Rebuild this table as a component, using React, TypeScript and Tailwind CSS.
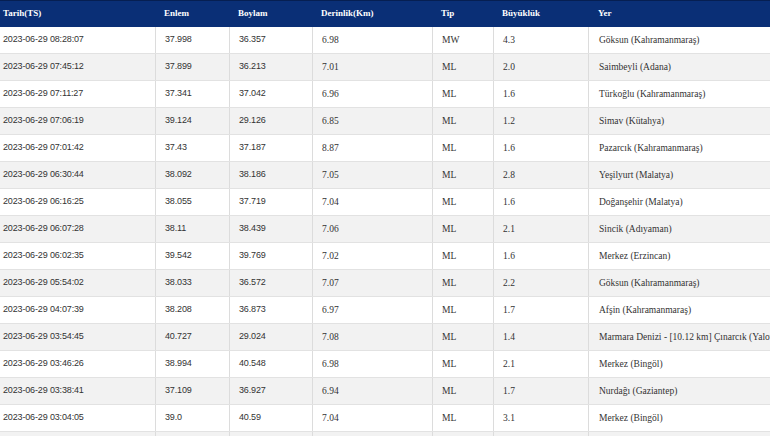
import React from "react";

const rows: string[][] = [
  ["2023-06-29 08:28:07", "37.998", "36.357", "6.98", "MW", "4.3", "Göksun (Kahramanmaraş)"],
  ["2023-06-29 07:45:12", "37.899", "36.213", "7.01", "ML", "2.0", "Saimbeyli (Adana)"],
  ["2023-06-29 07:11:27", "37.341", "37.042", "6.96", "ML", "1.6", "Türkoğlu (Kahramanmaraş)"],
  ["2023-06-29 07:06:19", "39.124", "29.126", "6.85", "ML", "1.2", "Simav (Kütahya)"],
  ["2023-06-29 07:01:42", "37.43", "37.187", "8.87", "ML", "1.6", "Pazarcık (Kahramanmaraş)"],
  ["2023-06-29 06:30:44", "38.092", "38.186", "7.05", "ML", "2.8", "Yeşilyurt (Malatya)"],
  ["2023-06-29 06:16:25", "38.055", "37.719", "7.04", "ML", "1.6", "Doğanşehir (Malatya)"],
  ["2023-06-29 06:07:28", "38.11", "38.439", "7.06", "ML", "2.1", "Sincik (Adıyaman)"],
  ["2023-06-29 06:02:35", "39.542", "39.769", "7.02", "ML", "1.6", "Merkez (Erzincan)"],
  ["2023-06-29 05:54:02", "38.033", "36.572", "7.07", "ML", "2.2", "Göksun (Kahramanmaraş)"],
  ["2023-06-29 04:07:39", "38.208", "36.873", "6.97", "ML", "1.7", "Afşin (Kahramanmaraş)"],
  ["2023-06-29 03:54:45", "40.727", "29.024", "7.08", "ML", "1.4", "Marmara Denizi - [10.12 km] Çınarcık (Yalova)"],
  ["2023-06-29 03:46:26", "38.994", "40.548", "6.98", "ML", "2.1", "Merkez (Bingöl)"],
  ["2023-06-29 03:38:41", "37.109", "36.927", "6.94", "ML", "1.7", "Nurdağı (Gaziantep)"],
  ["2023-06-29 03:04:05", "39.0", "40.59", "7.04", "ML", "3.1", "Merkez (Bingöl)"],
  ["", "", "", "", "", "", ""],
];

const headers = ["Tarih(TS)", "Enlem", "Boylam", "Derinlik(Km)", "Tip", "Büyüklük", "Yer"];

const grid = "grid grid-cols-[155px_74px_83px_120px_61px_95px_320px]";
const sans = "font-['Liberation_Sans',Arial,sans-serif] text-[9px] tracking-[-0.15px]";
const serif = "font-['Liberation_Serif','Times_New_Roman',serif] text-[9.5px]";

export default function App() {
  return (
    <div className="w-[770px] h-[436px] overflow-hidden bg-white">
      <div className="w-[928px]">
        <div className={`${grid} h-[27px] bg-[#0a2f76] border-t border-[#061f52] text-white`}>
          {headers.map((h, i) => (
            <div
              key={h}
              className={`flex items-center font-['Liberation_Serif','Times_New_Roman',serif] text-[9px] font-bold ${i === 0 ? "pl-[3px]" : i === 6 ? "pl-[10px]" : "pl-[9px]"}`}
            >
              {h}
            </div>
          ))}
        </div>
        {rows.map((r, ri) => (
          <div
            key={ri}
            className={`${grid} h-[27px] border-b border-[#e2e2e2] text-[#333333] ${ri % 2 === 1 ? "bg-[#f2f2f2]" : "bg-white"}`}
          >
            {r.map((c, ci) => (
              <div
                key={ci}
                className={`flex items-center whitespace-nowrap overflow-hidden ${ci === 0 ? "pl-[3px]" : "pl-[9px] border-l border-[#dcdcdc]"} ${ci === 6 ? "pl-[10px]" : ""} ${ci <= 2 ? sans : serif}`}
              >
                {c}
              </div>
            ))}
          </div>
        ))}
      </div>
    </div>
  );
}
